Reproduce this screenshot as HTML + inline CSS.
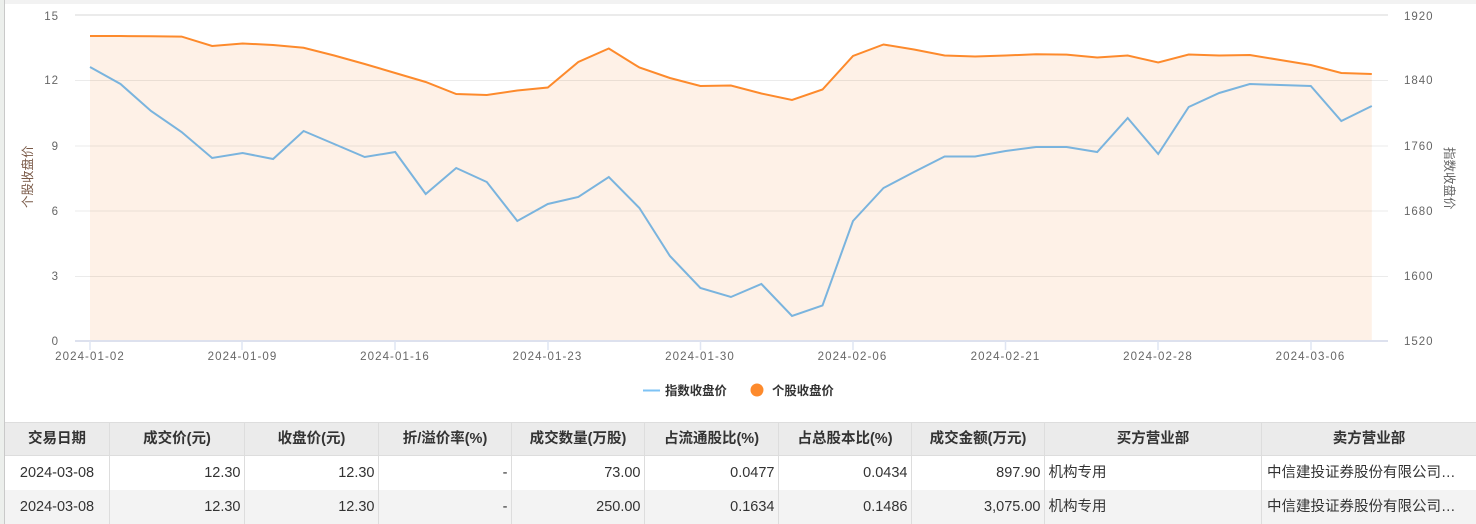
<!DOCTYPE html>
<html lang="zh">
<head>
<meta charset="utf-8">
<title>大宗交易</title>
<style>
html,body{margin:0;padding:0;background:#fff;}
body{width:1476px;height:524px;position:relative;overflow:hidden;font-family:"Liberation Sans","Noto Sans CJK SC",sans-serif;}
#top{position:absolute;left:0;top:0;width:1476px;height:4px;background:#f2f2f2;}
#left{position:absolute;left:0;top:0;width:4px;height:524px;background:#ecefec;border-right:1px solid #c9c9c9;}
svg{position:absolute;left:0;top:0;}
svg text{font-family:"Liberation Sans","Noto Sans CJK SC",sans-serif;}
table{position:absolute;left:5px;top:422px;width:1471px;border-collapse:separate;border-spacing:0;table-layout:fixed;font-size:14.5px;color:#333;}
th,td{box-sizing:border-box;border-right:1px solid #ddd;padding:0 3.5px 0;white-space:nowrap;overflow:hidden;}
th{height:34px;background:#ebebeb;font-weight:bold;text-align:center;border-top:1px solid #ddd;border-bottom:1px solid #ddd;padding-bottom:4px;}
td{height:34px;text-align:right;}
td.c{text-align:center;}
td.l{text-align:left;padding-bottom:4px;}
tr.b td{background:#f3f3f3;}
th:last-child,td:last-child{border-right:none;}
td.e{padding-left:5px;padding-right:14px;text-overflow:ellipsis;}
</style>
</head>
<body>
<div id="top"></div>
<div id="left"></div>
<svg width="1476" height="420" viewBox="0 0 1476 420">
  <polygon fill="#fef1e7" points="90,341 90,36 120.5,36 151,36.3 181.6,36.6 212.1,46 242.6,43.5 273.1,45 303.6,47.8 334.2,55.5 364.7,64 395.2,73 425.7,82 456.2,94 486.8,95 517.3,90.5 547.8,87.5 578.3,62 608.8,48.5 639.4,67.5 669.9,78 700.4,86 730.9,85.5 761.4,93.5 792,100 822.5,89.5 853,56 883.5,44.5 914,49.5 944.6,55.5 975.1,56.5 1005.6,55.5 1036.1,54.3 1066.6,54.6 1097.2,57.5 1127.7,55.5 1158.2,62.5 1188.7,54.5 1219.2,55.5 1249.8,55 1280.3,60 1310.8,65 1341.3,73 1371.8,74 1371.8,341"/>
  <g stroke="#000" stroke-opacity=".08" stroke-width="1">
    <line x1="75" x2="1388" y1="15" y2="15" stroke-width="2"/>
    <line x1="75" x2="1388" y1="80.5" y2="80.5"/>
    <line x1="75" x2="1388" y1="146" y2="146"/>
    <line x1="75" x2="1388" y1="211" y2="211"/>
    <line x1="75" x2="1388" y1="276.5" y2="276.5"/>
  </g>
  <line x1="75" x2="1388" y1="341" y2="341" stroke="#dde1ee" stroke-width="2"/>
  <g stroke="#dfe5f2" stroke-width="1.5">
    <line x1="90" x2="90" y1="341" y2="350"/>
    <line x1="242" x2="242" y1="341" y2="350"/>
    <line x1="395" x2="395" y1="341" y2="350"/>
    <line x1="548" x2="548" y1="341" y2="350"/>
    <line x1="700.5" x2="700.5" y1="341" y2="350"/>
    <line x1="853" x2="853" y1="341" y2="350"/>
    <line x1="1005.5" x2="1005.5" y1="341" y2="350"/>
    <line x1="1158" x2="1158" y1="341" y2="350"/>
    <line x1="1311" x2="1311" y1="341" y2="350"/>
  </g>
  <polyline fill="none" stroke="#7ab4de" stroke-width="2" points="90,67 120.5,84 151,111 181.6,132 212.1,158 242.6,153 273.1,159 303.6,131 334.2,144 364.7,157 395.2,152 425.7,194 456.2,168 486.8,182 517.3,221 547.8,204 578.3,197 608.8,177 639.4,208 669.9,256 700.4,288 730.9,297 761.4,284 792,316 822.5,305.5 853,221 883.5,188 914,172 944.6,156.5 975.1,156.5 1005.6,151 1036.1,147 1066.6,147 1097.2,152 1127.7,118 1158.2,154 1188.7,107 1219.2,93 1249.8,84 1280.3,85 1310.8,86 1341.3,121 1371.8,106"/>
  <polyline fill="none" stroke="#fd8a2c" stroke-width="2" points="90,36 120.5,36 151,36.3 181.6,36.6 212.1,46 242.6,43.5 273.1,45 303.6,47.8 334.2,55.5 364.7,64 395.2,73 425.7,82 456.2,94 486.8,95 517.3,90.5 547.8,87.5 578.3,62 608.8,48.5 639.4,67.5 669.9,78 700.4,86 730.9,85.5 761.4,93.5 792,100 822.5,89.5 853,56 883.5,44.5 914,49.5 944.6,55.5 975.1,56.5 1005.6,55.5 1036.1,54.3 1066.6,54.6 1097.2,57.5 1127.7,55.5 1158.2,62.5 1188.7,54.5 1219.2,55.5 1249.8,55 1280.3,60 1310.8,65 1341.3,73 1371.8,74"/>
  <g font-size="11.5" fill="#666" text-anchor="end" letter-spacing="1">
    <text x="59" y="20">15</text>
    <text x="59" y="84">12</text>
    <text x="59" y="150">9</text>
    <text x="59" y="215">6</text>
    <text x="59" y="280">3</text>
    <text x="59" y="345">0</text>
  </g>
  <g font-size="11.5" fill="#666" letter-spacing="1">
    <text x="1404" y="20">1920</text>
    <text x="1404" y="84">1840</text>
    <text x="1404" y="150">1760</text>
    <text x="1404" y="215">1680</text>
    <text x="1404" y="280">1600</text>
    <text x="1404" y="345">1520</text>
  </g>
  <g font-size="11.5" fill="#666" text-anchor="middle" letter-spacing="1.1">
    <text x="90" y="360">2024-01-02</text>
    <text x="242.5" y="360">2024-01-09</text>
    <text x="395" y="360">2024-01-16</text>
    <text x="547.5" y="360">2024-01-23</text>
    <text x="700" y="360">2024-01-30</text>
    <text x="852.5" y="360">2024-02-06</text>
    <text x="1005.5" y="360">2024-02-21</text>
    <text x="1158" y="360">2024-02-28</text>
    <text x="1310.5" y="360">2024-03-06</text>
  </g>
  <text transform="translate(32,208) rotate(-90)" font-size="12.5" fill="#7a5a48">个股收盘价</text>
  <text transform="translate(1445,147) rotate(90)" font-size="12.5" fill="#666">指数收盘价</text>
  <line x1="643" x2="660" y1="390.5" y2="390.5" stroke="#7ec3f5" stroke-width="2"/>
  <circle cx="757" cy="390" r="6.5" fill="#fd8a2c"/>
  <g font-size="12.4" font-weight="bold" fill="#333">
    <text x="665" y="395">指数收盘价</text>
    <text x="772" y="395">个股收盘价</text>
  </g>
</svg>
<table>
<colgroup>
<col style="width:105px"><col style="width:135px"><col style="width:134px"><col style="width:133px"><col style="width:133px"><col style="width:134px"><col style="width:133px"><col style="width:133px"><col style="width:217px"><col style="width:214px">
</colgroup>
<tr><th>交易日期</th><th>成交价(元)</th><th>收盘价(元)</th><th>折/溢价率(%)</th><th>成交数量(万股)</th><th>占流通股比(%)</th><th>占总股本比(%)</th><th>成交金额(万元)</th><th>买方营业部</th><th>卖方营业部</th></tr>
<tr><td class="c">2024-03-08</td><td>12.30</td><td>12.30</td><td>-</td><td>73.00</td><td>0.0477</td><td>0.0434</td><td>897.90</td><td class="l">机构专用</td><td class="l e">中信建投证券股份有限公司北京分公司</td></tr>
<tr class="b"><td class="c">2024-03-08</td><td>12.30</td><td>12.30</td><td>-</td><td>250.00</td><td>0.1634</td><td>0.1486</td><td>3,075.00</td><td class="l">机构专用</td><td class="l e">中信建投证券股份有限公司北京分公司</td></tr>
</table>
</body>
</html>
